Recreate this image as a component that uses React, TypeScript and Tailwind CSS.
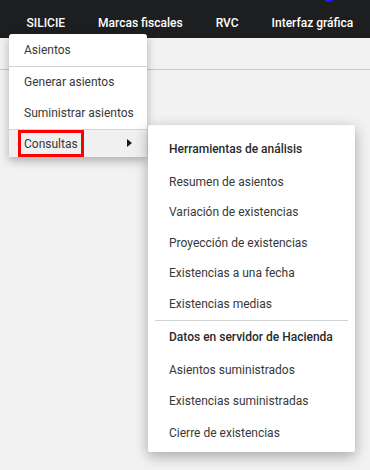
import React from "react";

const font = { fontFamily: "Roboto, 'Liberation Sans', sans-serif" };

function Sep({ className = "" }: { className?: string }) {
  return <div className={"h-px bg-[#d2d2d2] " + className} />;
}

export default function App() {
  const nav = ["SILICIE", "Marcas fiscales", "RVC", "Interfaz gráfica"];
  const tools = [
    "Resumen de asientos",
    "Variación de existencias",
    "Proyección de existencias",
    "Existencias a una fecha",
    "Existencias medias",
  ];
  const server = [
    "Asientos suministrados",
    "Existencias suministradas",
    "Cierre de existencias",
  ];
  return (
    <div
      className="relative w-[370px] h-[470px] overflow-hidden bg-[#f2f2f2] text-[12px]"
      style={font}
    >
      <div className="relative h-[38px] bg-[#1d1e20] flex items-center pt-[8px] pl-[10px]">
        {nav.map((n) => (
          <span key={n} className="px-[16.5px] text-white font-medium whitespace-nowrap">
            {n}
          </span>
        ))}
        <div className="absolute left-[325px] top-0 w-[8px] h-[2px] rounded-b-full bg-[#1a1aff]" />
      </div>
      <div className="h-[32px] border-b border-[#c8c8c8]" />

      {/* main menu */}
      <div className="absolute left-[9px] top-[34px] w-[138px] bg-white rounded-t-[3px] shadow-[0_4px_10px_rgba(0,0,0,0.28)] text-[#383838]">
        <div className="h-[32px] flex items-center pl-[15px]">Asientos</div>
        <Sep />
        <div className="h-[30px] flex items-center pl-[15px]">Generar asientos</div>
        <div className="h-[32px] flex items-center pl-[15px]">Suministrar asientos</div>
        <Sep />
        <div className="h-[27px] flex items-center justify-between bg-[#f0f0f0] pl-[9px] pr-[15px]">
          <span className="h-[27px] flex items-center border-[3px] border-[#ff0000] px-[3px]">
            Consultas
          </span>
          <svg width="5" height="8" viewBox="0 0 5 8" className="-mt-[1px]">
            <path d="M0 0 L5 4 L0 8 Z" fill="#1a1a1a" />
          </svg>
        </div>
      </div>

      {/* submenu */}
      <div className="absolute left-[148px] top-[125px] w-[207px] bg-white rounded-[2px] shadow-[0_4px_14px_rgba(0,0,0,0.32)] text-[#383838] pt-[6px] pb-[4px]">
        <div className="h-[35px] flex items-center pl-[21px] font-medium text-[#2a2a2a]">
          Herramientas de análisis
        </div>
        {tools.map((t) => (
          <div key={t} className="h-[30.5px] flex items-center pl-[21px] pt-[1px]">
            {t}
          </div>
        ))}
        <Sep className="mx-[7px] mt-[1px]" />
        <div className="h-[33px] flex items-center pl-[21px] font-medium text-[#2a2a2a]">
          Datos en servidor de Hacienda
        </div>
        {server.map((t) => (
          <div key={t} className="h-[31.5px] flex items-center pl-[21px] pt-[1px]">
            {t}
          </div>
        ))}
      </div>
    </div>
  );
}
